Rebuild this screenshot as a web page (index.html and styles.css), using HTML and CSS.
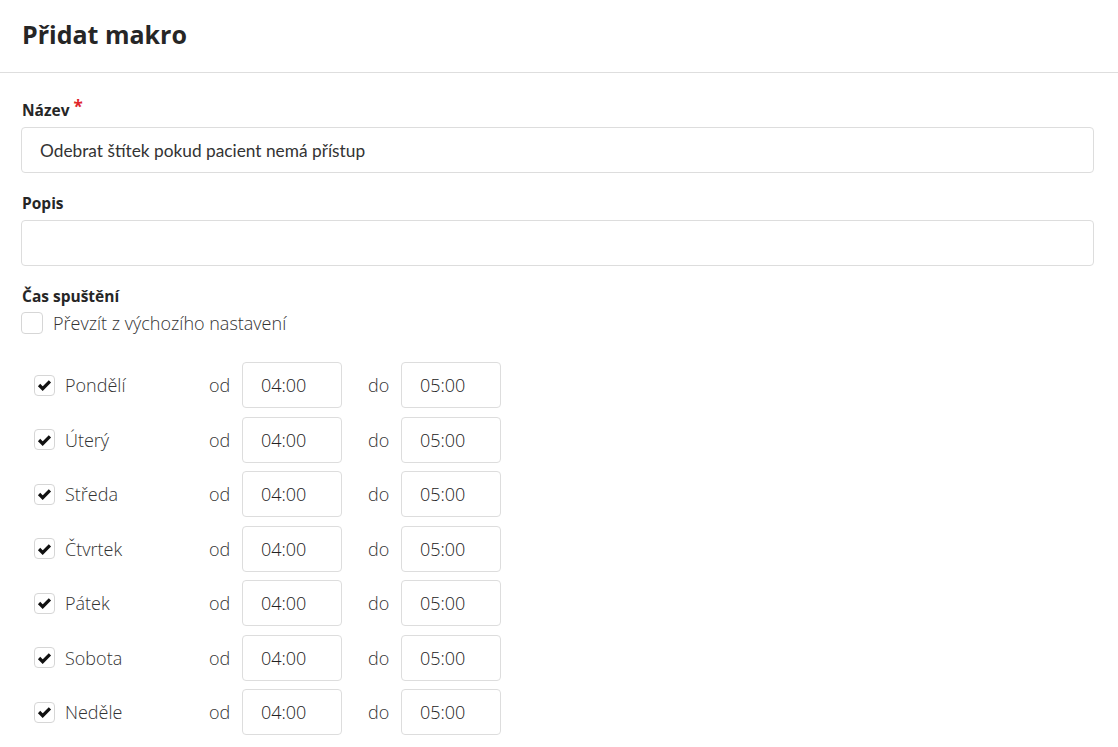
FILE: index.html
```html
<!DOCTYPE html>
<html lang="cs">
<head>
    <meta charset="UTF-8">
    <meta name="viewport" content="width=device-width, initial-scale=1.0">
    <title>Přidat makro</title>
    <link rel="stylesheet" href="styles.css">
</head>
<body>
    <div class="modal">
        <div class="modal-header">
            <h2>Přidat makro</h2>
        </div>

        <div class="modal-body">
            <div class="form-group">
                <label class="field-label" for="name">Název<span class="required">*</span></label>
                <input type="text" id="name" class="text-input" value="Odebrat štítek pokud pacient nemá přístup">
            </div>

            <div class="form-group">
                <label class="field-label" for="desc">Popis</label>
                <input type="text" id="desc" class="text-input">
            </div>

            <div class="form-group schedule">
                <div class="field-label">Čas spuštění</div>
                <label class="check">
                    <span class="box"></span>
                    <span class="check-text">Převzít z výchozího nastavení</span>
                </label>

                <div class="days">
                    <div class="day-row">
                        <label class="check day">
                            <span class="box checked"><svg viewBox="0 0 21 21"><polyline points="4.5,10.5 8.5,14.5 16.5,6.5"/></svg></span>
                            <span class="check-text">Pondělí</span>
                        </label>
                        <span class="word">od</span>
                        <input type="text" class="time-input" value="04:00">
                        <span class="word to">do</span>
                        <input type="text" class="time-input" value="05:00">
                    </div>
                    <div class="day-row">
                        <label class="check day">
                            <span class="box checked"><svg viewBox="0 0 21 21"><polyline points="4.5,10.5 8.5,14.5 16.5,6.5"/></svg></span>
                            <span class="check-text">Úterý</span>
                        </label>
                        <span class="word">od</span>
                        <input type="text" class="time-input" value="04:00">
                        <span class="word to">do</span>
                        <input type="text" class="time-input" value="05:00">
                    </div>
                    <div class="day-row">
                        <label class="check day">
                            <span class="box checked"><svg viewBox="0 0 21 21"><polyline points="4.5,10.5 8.5,14.5 16.5,6.5"/></svg></span>
                            <span class="check-text">Středa</span>
                        </label>
                        <span class="word">od</span>
                        <input type="text" class="time-input" value="04:00">
                        <span class="word to">do</span>
                        <input type="text" class="time-input" value="05:00">
                    </div>
                    <div class="day-row">
                        <label class="check day">
                            <span class="box checked"><svg viewBox="0 0 21 21"><polyline points="4.5,10.5 8.5,14.5 16.5,6.5"/></svg></span>
                            <span class="check-text">Čtvrtek</span>
                        </label>
                        <span class="word">od</span>
                        <input type="text" class="time-input" value="04:00">
                        <span class="word to">do</span>
                        <input type="text" class="time-input" value="05:00">
                    </div>
                    <div class="day-row">
                        <label class="check day">
                            <span class="box checked"><svg viewBox="0 0 21 21"><polyline points="4.5,10.5 8.5,14.5 16.5,6.5"/></svg></span>
                            <span class="check-text">Pátek</span>
                        </label>
                        <span class="word">od</span>
                        <input type="text" class="time-input" value="04:00">
                        <span class="word to">do</span>
                        <input type="text" class="time-input" value="05:00">
                    </div>
                    <div class="day-row">
                        <label class="check day">
                            <span class="box checked"><svg viewBox="0 0 21 21"><polyline points="4.5,10.5 8.5,14.5 16.5,6.5"/></svg></span>
                            <span class="check-text">Sobota</span>
                        </label>
                        <span class="word">od</span>
                        <input type="text" class="time-input" value="04:00">
                        <span class="word to">do</span>
                        <input type="text" class="time-input" value="05:00">
                    </div>
                    <div class="day-row">
                        <label class="check day">
                            <span class="box checked"><svg viewBox="0 0 21 21"><polyline points="4.5,10.5 8.5,14.5 16.5,6.5"/></svg></span>
                            <span class="check-text">Neděle</span>
                        </label>
                        <span class="word">od</span>
                        <input type="text" class="time-input" value="04:00">
                        <span class="word to">do</span>
                        <input type="text" class="time-input" value="05:00">
                    </div>
                </div>
            </div>
        </div>
    </div>
</body>
</html>
```

FILE: styles.css
```css
* {
    margin: 0;
    padding: 0;
    box-sizing: border-box;
}

body {
    font-family: 'Open Sans', 'Noto Sans', sans-serif;
    background: #fff;
    color: #333;
    overflow: hidden;
}

.modal-header {
    height: 73px;
    padding: 0 22px;
    display: flex;
    align-items: center;
    border-bottom: 1px solid #dedede;
}

.modal-header h2 {
    font-size: 25px;
    font-weight: 700;
    color: #262626;
    line-height: 1;
    margin-top: -3px;
}

.modal-body {
    padding: 27px 24px 0 21px;
}

.form-group {
    margin-bottom: 20px;
}

.field-label {
    display: block;
    font-size: 15.5px;
    font-weight: 700;
    color: #262626;
    line-height: 20px;
    margin-bottom: 7px;
    padding-left: 1px;
}

.required {
    color: #e0252b;
    font-size: 17px;
    margin-left: 4px;
    position: relative;
    top: -3px;
}

.text-input,
.time-input {
    display: block;
    font-family: Lato, 'Open Sans', sans-serif;
    font-size: 17.3px;
    color: #333;
    border: 1px solid #dddddd;
    border-radius: 4px;
    background: #fff;
    height: 46px;
    padding: 0 18px;
    outline: none;
}

.text-input {
    width: 100%;
}

.time-input {
    width: 100px;
    font-family: 'Open Sans', sans-serif;
    font-weight: 300;
    font-size: 18px;
    color: #222;
}

.schedule .field-label {
    margin-bottom: 6px;
}

.check {
    display: flex;
    align-items: center;
    gap: 10px;
    font-size: 18px;
    font-weight: 300;
    color: #333;
    line-height: 22px;
}

.box {
    width: 22px;
    height: 22px;
    border: 1px solid #d6d6d6;
    border-radius: 4px;
    background: #fff;
    display: flex;
    align-items: center;
    justify-content: center;
    flex-shrink: 0;
}

.box.checked {
    width: 21px;
    height: 21px;
}

.box svg {
    width: 20px;
    height: 20px;
    fill: none;
    stroke: #111;
    stroke-width: 3.6;
    stroke-linecap: butt;
    stroke-linejoin: miter;
}

.days {
    margin-top: 28px;
    padding-left: 13px;
    display: flex;
    flex-direction: column;
    gap: 8.5px;
}

.day-row {
    display: flex;
    align-items: center;
}

.day {
    width: 175px;
}

.word {
    width: 33px;
    font-size: 18px;
    font-weight: 300;
    color: #333;
}

.word.to {
    margin-left: 26px;
}
```
